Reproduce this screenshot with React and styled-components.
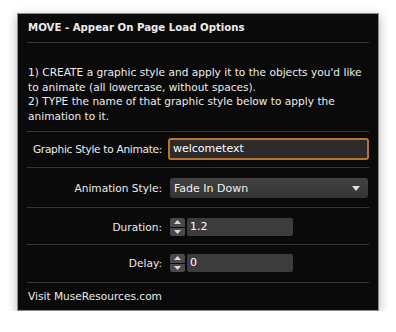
import React from "react";
import styled, { createGlobalStyle } from "styled-components";

const Global = createGlobalStyle`
  html, body { margin: 0; padding: 0; background: #ffffff; }
  body { font-family: "DejaVu Sans", "Noto Sans", sans-serif; }
`;

const Page = styled.div`
  padding: 13px 0 0 17px;
`;

const Panel = styled.div`
  width: 362px;
  height: 298px;
  box-sizing: border-box;
  background: #0a0a0a;
  border: 1px solid #8c8c8c;
  box-shadow: 0 3px 10px rgba(0, 0, 0, 0.3);
  padding: 0 9px;
  color: #ececec;
  font-family: "DejaVu Sans", "Noto Sans", sans-serif;
  font-size: 10.6px;
  display: flex;
  flex-direction: column;
`;

const Title = styled.div`
  font-weight: bold;
  font-size: 10.2px;
  padding: 7px 1px 0;
  height: 21px;
  line-height: 14px;
`;

const Section = styled.div`
  border-top: 1px solid #363636;
  padding: ${(p) => p.$pad || "0"};
  height: ${(p) => p.$h}px;
  box-sizing: border-box;
  display: ${(p) => (p.$row ? "flex" : "block")};
  align-items: flex-start;
`;

const Para = styled.p`
  margin: 0;
  padding: 0 1px;
  line-height: 14.5px;
`;

const Label = styled.div`
  width: 135px;
  flex: 0 0 auto;
  display: flex;
  justify-content: flex-end;
  white-space: nowrap;
  letter-spacing: ${(p) => p.$ls || 0}px;
  line-height: ${(p) => p.$lh}px;
  margin-right: ${(p) => p.$gap}px;
`;

const TextInput = styled.div`
  width: 202px;
  height: 22px;
  box-sizing: border-box;
  border: 2px solid #b8742e;
  border-radius: 3px;
  background: #2b2b2b;
  color: #ffffff;
  padding-left: 3px;
  line-height: 18px;
  font-size: 11px;
`;

const Select = styled.div`
  width: 198px;
  height: 20px;
  box-sizing: border-box;
  border-radius: 3px;
  background: linear-gradient(#424242, #343434);
  display: flex;
  align-items: center;
  justify-content: space-between;
  padding: 0 8px 0 4px;
  font-size: 11px;
  color: #f2f2f2;
`;

const Arrow = styled.svg`
  width: 8px;
  height: 5px;
  display: block;
`;

const NumField = styled.div`
  display: flex;
  gap: 2px;
  height: 18px;
`;

const Stepper = styled.div`
  width: 15px;
  display: flex;
  flex-direction: column;
  gap: 1px;
`;

const StepBtn = styled.div`
  flex: 1;
  background: #4a4a4a;
  border-radius: ${(p) => (p.$up ? "2px 2px 0 0" : "0 0 2px 2px")};
  display: flex;
  align-items: center;
  justify-content: center;
`;

const NumInput = styled.div`
  width: 106px;
  background: #3c3c3c;
  border-radius: 2px;
  color: #ffffff;
  padding-left: 3px;
  line-height: 18px;
  font-size: 11px;
  box-sizing: border-box;
`;

const Footer = styled.div`
  border-top: 1px solid #363636;
  padding: 6px 1px 0;
  line-height: 14px;
  font-size: 10.6px;
`;

const Tri = ({ up }) => (
  <svg width="7" height="4" viewBox="0 0 7 4">
    <path d={up ? "M0 4 L3.5 0 L7 4 Z" : "M0 0 L3.5 4 L7 0 Z"} fill="#d8d8d8" />
  </svg>
);

const Number = ({ value }) => (
  <NumField>
    <Stepper>
      <StepBtn $up>
        <Tri up />
      </StepBtn>
      <StepBtn>
        <Tri />
      </StepBtn>
    </Stepper>
    <NumInput>{value}</NumInput>
  </NumField>
);

export default function App() {
  return (
    <>
      <Global />
      <Page>
        <Panel>
          <Title>MOVE - Appear On Page Load Options</Title>
          <Section $h={89} $pad="22px 0 0">
            <Para>
              1) CREATE a graphic style and apply it to the objects you'd like
              to animate (all lowercase, without spaces).
              <br />
              2) TYPE the name of that graphic style below to apply the
              animation to it.
            </Para>
          </Section>
          <Section $row $h={36} $pad="6px 0 0">
            <Label $lh={22} $gap={6} $ls={-0.3}>Graphic Style to Animate:</Label>
            <TextInput>welcometext</TextInput>
          </Section>
          <Section $row $h={40} $pad="10px 0 0">
            <Label $lh={20} $gap={8}>Animation Style:</Label>
            <Select>
              <span>Fade In Down</span>
              <Arrow viewBox="0 0 8 5">
                <path d="M0 0 L8 0 L4 5 Z" fill="#e0e0e0" />
              </Arrow>
            </Select>
          </Section>
          <Section $row $h={37} $pad="10px 0 0">
            <Label $lh={18} $gap={8}>Duration:</Label>
            <Number value="1.2" />
          </Section>
          <Section $row $h={38} $pad="9px 0 0">
            <Label $lh={18} $gap={8}>Delay:</Label>
            <Number value="0" />
          </Section>
          <Footer>Visit MuseResources.com</Footer>
        </Panel>
      </Page>
    </>
  );
}
